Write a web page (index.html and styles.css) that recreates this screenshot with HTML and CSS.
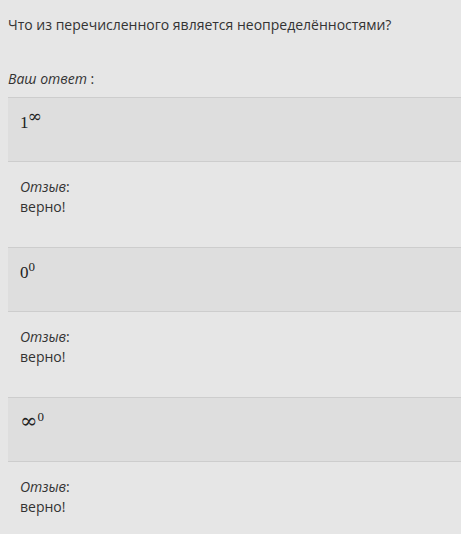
FILE: index.html
```html
<!DOCTYPE html>
<html lang="ru">
<head>
<meta charset="utf-8">
<link rel="stylesheet" href="styles.css">
</head>
<body>
<div class="page">
  <p class="question">Что из перечисленного является неопределённостями?</p>
  <p class="label"><em>Ваш ответ</em> :</p>
  <div class="answers">
    <div class="answer"><span class="math">1<sup class="inf">∞</sup></span></div>
    <div class="feedback"><em>Отзыв</em>:<br>верно!</div>
    <div class="answer"><span class="math">0<sup>0</sup></span></div>
    <div class="feedback"><em>Отзыв</em>:<br>верно!</div>
    <div class="answer"><span class="math"><span class="inf">∞</span><sup>0</sup></span></div>
    <div class="feedback"><em>Отзыв</em>:<br>верно!</div>
  </div>
</div>
</body>
</html>
```
FILE: styles.css
```css
html, body {
  margin: 0;
  padding: 0;
  background: #e6e6e6;
}
body {
  font-family: "Open Sans", "DejaVu Sans", sans-serif;
  font-size: 14px;
  line-height: 20px;
  color: #333;
}
.page {
  padding: 15px 0 0 8px;
}
.question {
  margin: 0;
}
.label {
  margin: 34px 0 8px 0;
}
.answer {
  background: #dedede;
  border-top: 1px solid #cdcdcd;
  border-bottom: 1px solid #cdcdcd;
  height: 65px;
  box-sizing: border-box;
  padding: 13px 12px 0 12px;
}
.math {
  font-family: "Liberation Serif", "Times New Roman", serif;
  font-size: 17px;
  line-height: 24px;
  color: #222;
}
.math .inf {
  font-family: "DejaVu Serif", serif;
  font-weight: normal;
  font-size: 21px;
  line-height: 0;
}
.math sup {
  font-size: 13px;
  vertical-align: 7px;
  line-height: 0;
}
.math sup.inf {
  font-size: 17px;
  vertical-align: 6px;
  margin-left: -1px;
}
.feedback {
  padding: 15px 12px 30px 12px;
  height: 85px;
  box-sizing: border-box;
}
```
